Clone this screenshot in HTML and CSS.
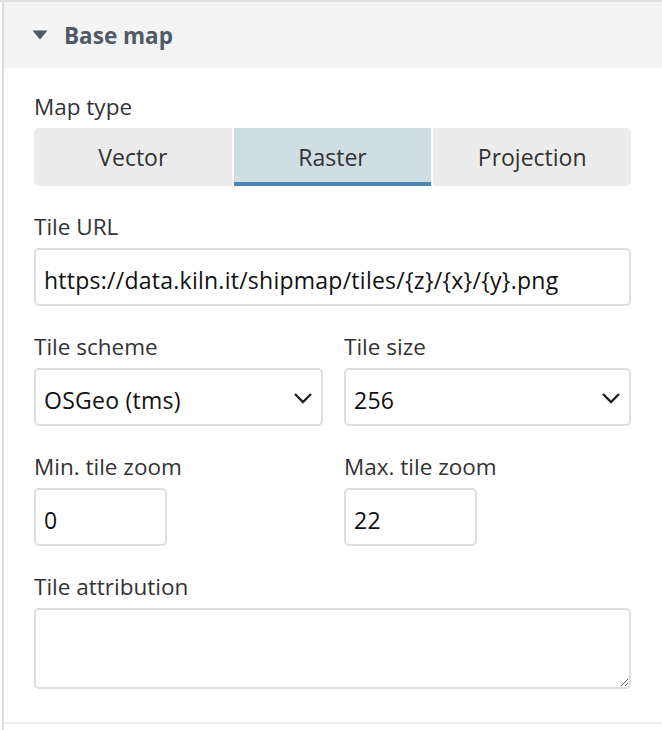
FILE: index.html
```html
<!DOCTYPE html>
<html lang="en">
<head>
<meta charset="UTF-8">
<meta name="viewport" content="width=device-width, initial-scale=1.0">
<title>Base map</title>
<link rel="stylesheet" href="styles.css">
</head>
<body>

<div class="panel">
    <div class="panel-head">
        <svg class="caret" width="16" height="10" viewBox="0 0 16 10"><path d="M0.5 0.5 L15.5 0.5 L8 9.5 Z" fill="#4f5961"/></svg>
        <span>Base map</span>
    </div>
    <div class="panel-body">
        <div class="field">
            <label>Map type</label>
            <div class="segmented">
                <button class="seg">Vector</button>
                <button class="seg active">Raster</button>
                <button class="seg">Projection</button>
            </div>
        </div>

        <div class="field">
            <label>Tile URL</label>
            <input class="input" type="text" value="https://data.kiln.it/shipmap/tiles/{z}/{x}/{y}.png">
        </div>

        <div class="field-row">
            <div class="field">
                <label>Tile scheme</label>
                <div class="select-wrap">
                    <select class="input select">
                        <option>OSGeo (tms)</option>
                        <option>XYZ</option>
                    </select>
                    <svg class="chevron" width="20" height="12" viewBox="0 0 20 12"><path d="M2 2 L10 10 L18 2" fill="none" stroke="#222" stroke-width="2.4"/></svg>
                </div>
            </div>
            <div class="field">
                <label>Tile size</label>
                <div class="select-wrap">
                    <select class="input select">
                        <option>256</option>
                        <option>512</option>
                    </select>
                    <svg class="chevron" width="20" height="12" viewBox="0 0 20 12"><path d="M2 2 L10 10 L18 2" fill="none" stroke="#222" stroke-width="2.4"/></svg>
                </div>
            </div>
        </div>

        <div class="field-row">
            <div class="field">
                <label>Min. tile zoom</label>
                <input class="input small" type="text" value="0">
            </div>
            <div class="field">
                <label>Max. tile zoom</label>
                <input class="input small" type="text" value="22">
            </div>
        </div>

        <div class="field last">
            <label>Tile attribution</label>
            <textarea class="input textarea"></textarea>
        </div>
    </div>
</div>
<div class="panel next"></div>

</body>
</html>
```

FILE: styles.css
```css
body {
    margin: 0;
    padding: 0;
    font-family: "Open Sans", "Liberation Sans", sans-serif;
    background: #fff;
    color: #333;
    border-top: 2px solid #e0e0e0;
}
.panel {
    margin-left: 2px;
    border-left: 2px solid #dedede;
}
.panel-head {
    height: 66px;
    background: #f4f4f4;
    display: flex;
    align-items: center;
    padding-left: 28px;
    font-size: 22.5px;
    font-weight: bold;
    color: #4f5a64;
}
.caret {
    margin-right: 16px;
    margin-top: -1px;
}
.panel-body {
    padding: 28px 31px 33px 30px;
    border-bottom: 2px solid #ececec;
}
.field {
    margin-bottom: 30px;
}
.field.last {
    margin-bottom: 0;
}
.field label {
    display: block;
    font-size: 22.5px;
    line-height: 22px;
    margin-bottom: 10px;
    color: #333;
}
.segmented {
    display: flex;
    gap: 2px;
}
.seg {
    flex: 1;
    height: 58px;
    border: none;
    background: #ececec;
    font-family: inherit;
    font-size: 23px;
    color: #333;
    padding: 0;
    border-bottom: 4px solid transparent;
    padding-top: 4px;
}
.seg:first-child {
    border-radius: 5px 0 0 5px;
}
.seg:last-child {
    border-radius: 0 5px 5px 0;
}
.seg.active {
    background: #cfdde4;
    border-bottom-color: #4a86b3;
}
.input {
    display: block;
    box-sizing: border-box;
    width: 100%;
    height: 58px;
    border: 2px solid #dedede;
    border-radius: 5px;
    background: #fff;
    font-family: inherit;
    font-size: 23px;
    letter-spacing: 0.25px;
    color: #111;
    padding: 6px 8px 0;
    margin: 0;
    outline: none;
}
.input.small {
    width: 133px;
}
.field-row {
    display: grid;
    grid-template-columns: 289px 1fr;
    column-gap: 21px;
}
.select-wrap {
    position: relative;
}
.select {
    appearance: none;
    -webkit-appearance: none;
}
.chevron {
    position: absolute;
    right: 10px;
    top: 24px;
    pointer-events: none;
}
.textarea {
    height: 81px;
    resize: vertical;
    padding: 8px 8px;
}
.panel.next {
    height: 10px;
}
```
